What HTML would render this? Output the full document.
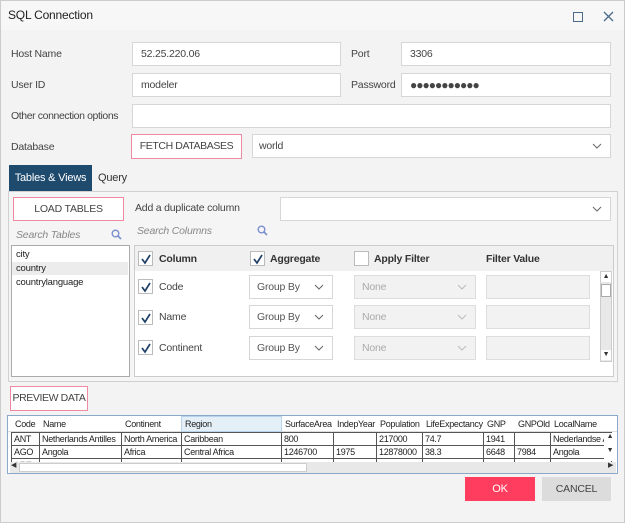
<!DOCTYPE html>
<html><head><style>
*{box-sizing:border-box;margin:0;padding:0}
body{width:625px;height:523px;overflow:hidden;background:#f3f3f3;font-family:"Liberation Sans",sans-serif;font-size:10.5px;letter-spacing:-0.2px;color:#333;position:relative;white-space:nowrap}
.a{position:absolute}
.in{position:absolute;background:#fff;border:1px solid #d6d6d6;padding-left:8px;line-height:22px;color:#444}
.lbl{position:absolute;color:#444}
.btn{position:absolute;background:#fff;border:1px solid #f08aa0;text-align:center;color:#444}
.cb{position:absolute;width:15px;height:15px;background:#fff;border:1px solid #bbb}
.cb svg{position:absolute;left:1px;top:1px}
.sel{position:absolute;background:#fff;border:1px solid #d6d6d6;padding-left:7px;line-height:22px;color:#555}
.dis{position:absolute;background:#f2f2f2;border:1px solid #ddd;padding-left:7px;line-height:22px;color:#aaa}
.chev{position:absolute;right:8px;top:0}
table{border-collapse:collapse;font-size:9px;letter-spacing:-0.3px}
td{border:1px solid #555;height:13px;padding-left:2px;white-space:nowrap;overflow:hidden;color:#222}
.hd span{position:absolute}
</style></head><body>
<div class="a" style="left:0;top:0;width:625px;height:523px;border:1px solid #ccc"></div>
<div class="a" style="left:1px;top:1px;width:623px;height:29px;background:#f7f7f7"></div>
<div class="a" style="left:8px;top:8px;font-size:12px;color:#222">SQL Connection</div>
<div class="a" style="left:573px;top:12px;width:10px;height:10px;border:1.5px solid #4a6a8a"></div>
<svg class="a" style="left:603px;top:11px" width="11" height="11"><path d="M1 1L10 10M10 1L1 10" stroke="#4a6a8a" stroke-width="1.3"/></svg>

<div class="lbl" style="left:11px;top:48px">Host Name</div>
<div class="in" style="left:132px;top:42px;width:209px;height:24px">52.25.220.06</div>
<div class="lbl" style="left:351px;top:48px">Port</div>
<div class="in" style="left:401px;top:42px;width:210px;height:24px">3306</div>
<div class="lbl" style="left:11px;top:79px">User ID</div>
<div class="in" style="left:132px;top:73px;width:209px;height:24px">modeler</div>
<div class="lbl" style="left:351px;top:79px">Password</div>
<div class="in" style="left:401px;top:73px;width:210px;height:24px;font-size:12px;letter-spacing:-1px">●●●●●●●●●●●</div>
<div class="lbl" style="left:11px;top:110px;letter-spacing:-0.4px">Other connection options</div>
<div class="in" style="left:132px;top:104px;width:479px;height:24px"></div>
<div class="lbl" style="left:11px;top:141px">Database</div>
<div class="btn" style="left:131px;top:134px;width:111px;height:25px;line-height:23px;letter-spacing:-0.4px">FETCH DATABASES</div>
<div class="in" style="left:252px;top:134px;width:359px;height:24px;padding-left:6px">world<svg class="chev" width="10" height="22"><path d="M1 9l4 4 4-4" stroke="#666" fill="none"/></svg></div>

<div class="a" style="left:9px;top:165px;width:83px;height:26px;background:#1e4a6e;color:#fff;font-size:11px;line-height:27px;text-align:center">Tables &amp; Views</div>
<div class="a" style="left:98px;top:172px;font-size:11px;color:#333">Query</div>
<div class="a" style="left:8px;top:191px;width:610px;height:191px;border:1px solid #d0d0d0;background:#f5f5f5"></div>

<div class="btn" style="left:13px;top:197px;width:111px;height:24px;line-height:22px">LOAD TABLES</div>
<div class="lbl" style="left:135px;top:202px">Add a duplicate column</div>
<div class="in" style="left:280px;top:197px;width:331px;height:24px"><svg class="chev" width="10" height="22"><path d="M1 9l4 4 4-4" stroke="#666" fill="none"/></svg></div>
<div class="lbl" style="left:16px;top:229px;font-style:italic;color:#888">Search Tables</div>
<svg class="a" style="left:111px;top:229px" width="11" height="11"><circle cx="4.5" cy="4.5" r="3.3" stroke="#7a8fd0" fill="none" stroke-width="1.4"/><path d="M7 7l3 3" stroke="#7a8fd0" stroke-width="1.6"/></svg>
<div class="lbl" style="left:137px;top:225px;font-style:italic;color:#888">Search Columns</div>
<svg class="a" style="left:257px;top:225px" width="11" height="11"><circle cx="4.5" cy="4.5" r="3.3" stroke="#7a8fd0" fill="none" stroke-width="1.4"/><path d="M7 7l3 3" stroke="#7a8fd0" stroke-width="1.6"/></svg>

<div class="a" style="left:11px;top:245px;width:119px;height:132px;background:#fff;border:1px solid #aaa"></div>
<div class="a" style="left:12px;top:262px;width:116px;height:13px;background:#ececec"></div>
<div class="a" style="left:16px;top:249px;font-size:9.5px;color:#222">city</div>
<div class="a" style="left:16px;top:263px;font-size:9.5px;color:#222">country</div>
<div class="a" style="left:16px;top:277px;font-size:9.5px;color:#222">countrylanguage</div>

<div class="a" style="left:134px;top:245px;width:480px;height:132px;background:#fff;border:1px solid #ccc"></div>
<div class="a" style="left:135px;top:246px;width:478px;height:25px;background:#f0f0f0"></div>
<div class="cb" style="left:138px;top:251px"><svg width="12" height="12"><path d="M2 6l3 4 5-8" stroke="#1e3f66" stroke-width="1.7" fill="none"/></svg></div>
<div class="a" style="left:159px;top:253px;font-weight:bold;color:#333">Column</div>
<div class="cb" style="left:250px;top:251px"><svg width="12" height="12"><path d="M2 6l3 4 5-8" stroke="#1e3f66" stroke-width="1.7" fill="none"/></svg></div>
<div class="a" style="left:270px;top:253px;font-weight:bold;color:#333">Aggregate</div>
<div class="cb" style="left:354px;top:251px"></div>
<div class="a" style="left:374px;top:253px;font-weight:bold;color:#333">Apply Filter</div>
<div class="a" style="left:486px;top:253px;font-weight:bold;color:#333">Filter Value</div>

<div class="cb" style="left:138px;top:279px"><svg width="12" height="12"><path d="M2 6l3 4 5-8" stroke="#1e3f66" stroke-width="1.7" fill="none"/></svg></div>
<div class="a" style="left:159px;top:281px;color:#444">Code</div>
<div class="sel" style="left:249px;top:275px;width:84px;height:24px">Group By<svg class="chev" width="10" height="22"><path d="M1 9l4 4 4-4" stroke="#666" fill="none"/></svg></div>
<div class="dis" style="left:354px;top:275px;width:122px;height:24px">None<svg class="chev" width="10" height="22"><path d="M1 9l4 4 4-4" stroke="#bbb" fill="none"/></svg></div>
<div class="dis" style="left:486px;top:275px;width:104px;height:24px"></div>

<div class="cb" style="left:138px;top:310px"><svg width="12" height="12"><path d="M2 6l3 4 5-8" stroke="#1e3f66" stroke-width="1.7" fill="none"/></svg></div>
<div class="a" style="left:159px;top:311px;color:#444">Name</div>
<div class="sel" style="left:249px;top:305px;width:84px;height:24px">Group By<svg class="chev" width="10" height="22"><path d="M1 9l4 4 4-4" stroke="#666" fill="none"/></svg></div>
<div class="dis" style="left:354px;top:305px;width:122px;height:24px">None<svg class="chev" width="10" height="22"><path d="M1 9l4 4 4-4" stroke="#bbb" fill="none"/></svg></div>
<div class="dis" style="left:486px;top:305px;width:104px;height:24px"></div>

<div class="cb" style="left:138px;top:340px"><svg width="12" height="12"><path d="M2 6l3 4 5-8" stroke="#1e3f66" stroke-width="1.7" fill="none"/></svg></div>
<div class="a" style="left:159px;top:342px;color:#444">Continent</div>
<div class="sel" style="left:249px;top:336px;width:84px;height:24px">Group By<svg class="chev" width="10" height="22"><path d="M1 9l4 4 4-4" stroke="#666" fill="none"/></svg></div>
<div class="dis" style="left:354px;top:336px;width:122px;height:24px">None<svg class="chev" width="10" height="22"><path d="M1 9l4 4 4-4" stroke="#bbb" fill="none"/></svg></div>
<div class="dis" style="left:486px;top:336px;width:104px;height:24px"></div>

<div class="a" style="left:600px;top:271px;width:12px;height:91px;background:#e8e8e8;border:1px solid #ccc"></div>
<div class="a" style="left:601px;top:272px;width:10px;height:10px;background:#fff;font-size:7px;text-align:center;line-height:10px">▲</div>
<div class="a" style="left:601px;top:284px;width:10px;height:13px;background:#fff;border:1px solid #aaa"></div>
<div class="a" style="left:601px;top:350px;width:10px;height:10px;background:#fff;font-size:7px;text-align:center;line-height:10px">▼</div>

<div class="btn" style="left:10px;top:386px;width:78px;height:25px;line-height:23px;letter-spacing:-0.4px">PREVIEW DATA</div>

<div class="a" style="left:7px;top:415px;width:611px;height:59px;background:#fff;border:1px solid #8aa8c8;overflow:hidden">
<div class="a" style="left:0;top:0;width:611px;height:16px;background:#fff;border-bottom:1px solid #ddd"></div>
<div class="a" style="left:173px;top:0;width:101px;height:16px;background:#e4eff8;border:1px solid #b8d4ec"></div>
<div class="a hd" style="top:3px;left:7px;font-size:9px;letter-spacing:-0.3px;color:#222">
<span style="left:0">Code</span><span style="left:28px">Name</span><span style="left:110px">Continent</span><span style="left:170px">Region</span><span style="left:270px">SurfaceArea</span><span style="left:322px">IndepYear</span><span style="left:365px">Population</span><span style="left:411px">LifeExpectancy</span><span style="left:472px">GNP</span><span style="left:503px">GNPOld</span><span style="left:539px">LocalName</span></div>
<table class="a" style="left:3px;top:16px;width:600px;table-layout:fixed">
<colgroup><col style="width:28px"><col style="width:82px"><col style="width:60px"><col style="width:100px"><col style="width:52px"><col style="width:43px"><col style="width:46px"><col style="width:61px"><col style="width:31px"><col style="width:36px"><col style="width:61px"></colgroup>
<tr><td>ANT</td><td>Netherlands Antilles</td><td>North America</td><td>Caribbean</td><td>800</td><td></td><td>217000</td><td>74.7</td><td>1941</td><td></td><td>Nederlandse A</td></tr>
<tr><td>AGO</td><td>Angola</td><td>Africa</td><td>Central Africa</td><td>1246700</td><td>1975</td><td>12878000</td><td>38.3</td><td>6648</td><td>7984</td><td>Angola</td></tr>
<tr><td style="color:#999">ARE</td><td></td><td></td><td></td><td></td><td></td><td></td><td></td><td></td><td></td><td></td></tr>
</table>
<div class="a" style="left:2px;top:46px;width:606px;height:11px;background:#e8e8e8"></div>
<div class="a" style="left:11px;top:47px;width:288px;height:9px;background:#fff;border:1px solid #ccc"></div>
<div class="a" style="left:3px;top:45px;font-size:7px">◀</div>
<div class="a" style="left:600px;top:45px;font-size:7px">▶</div>
<div class="a" style="left:596px;top:17px;width:12px;height:28px;background:#fff;font-size:7px;text-align:center">▲<br><br>▼</div>
</div>

<div class="a" style="left:465px;top:477px;width:70px;height:24px;background:#ff3d5f;color:#fff;text-align:center;line-height:24px;font-size:11px">OK</div>
<div class="a" style="left:542px;top:477px;width:69px;height:24px;background:#dcdcdc;color:#444;text-align:center;line-height:24px;font-size:10.5px">CANCEL</div>
</body></html>
